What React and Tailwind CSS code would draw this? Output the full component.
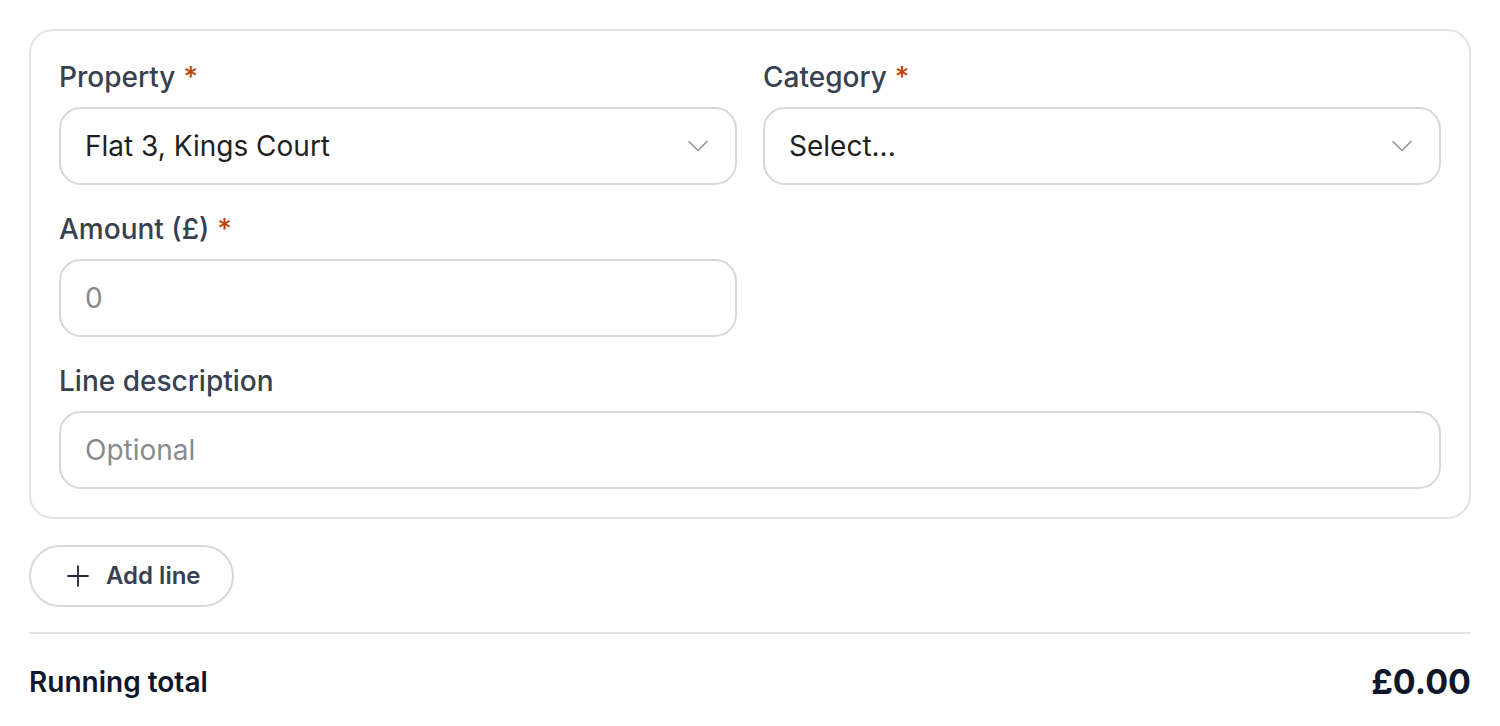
import { ChevronDown, Plus } from "lucide-react";

function Label({ children, required }) {
  return (
    <label className="block h-[36px] mb-[12px] text-[28px] leading-[36px] font-medium text-[#374151]">
      {children}
      {required && <span className="ml-[8px] text-[#c2410c]">*</span>}
    </label>
  );
}

function SelectBox({ value }) {
  return (
    <div className="flex items-center justify-between h-[78px] pl-[24px] pr-[19px] rounded-[22px] border-2 border-[#d8d8dc] bg-white">
      <span className="text-[28px] text-[#1f1f1f]">{value}</span>
      <ChevronDown className="w-[36px] h-[36px] text-[#8e8e93]" strokeWidth={1} />
    </div>
  );
}

function TextBox({ placeholder }) {
  return (
    <input
      placeholder={placeholder}
      className="block w-full h-[78px] px-[24px] rounded-[22px] border-2 border-[#d8d8dc] bg-white text-[28px] text-[#1f1f1f] placeholder:text-[#8a8a8a] outline-none"
    />
  );
}

export default function App() {
  return (
    <div className="min-h-[726px] bg-white px-[29px] pt-[29px] font-['Inter',sans-serif]">
      {/* Expense line card */}
      <div className="rounded-[24px] border-2 border-[#e4e4e7] px-[28px] pt-[28px] pb-[28px]">
        <div className="grid grid-cols-2 gap-x-[26px]">
          <div>
            <Label required>Property</Label>
            <SelectBox value="Flat 3, Kings Court" />
          </div>
          <div>
            <Label required>Category</Label>
            <SelectBox value="Select..." />
          </div>
          <div className="mt-[26px]">
            <Label required>Amount (£)</Label>
            <TextBox placeholder="0" />
          </div>
          <div />
          <div className="col-span-2 mt-[26px]">
            <Label>Line description</Label>
            <TextBox placeholder="Optional" />
          </div>
        </div>
      </div>

      <button className="mt-[26px] flex items-center gap-[11px] h-[62px] pl-[30px] pr-[31px] rounded-full border-2 border-[#d8d8dc] bg-white text-[24px] font-semibold text-[#374151]">
        <Plus className="w-[34px] h-[34px] text-[#1f2937]" strokeWidth={1.3} />
        Add line
      </button>

      <div className="mt-[25px] border-t-2 border-[#e4e4e7]" />

      <div className="flex items-center justify-between pt-[28px]">
        <span className="text-[28px] leading-[40px] font-semibold text-[#0f172a]">Running total</span>
        <span className="text-[34px] leading-[40px] font-bold text-[#0f172a]">£0.00</span>
      </div>
    </div>
  );
}
